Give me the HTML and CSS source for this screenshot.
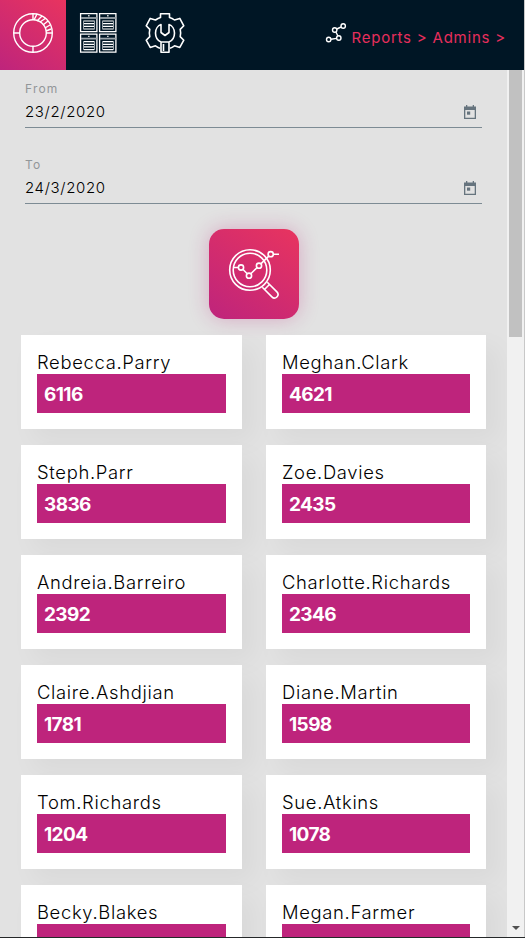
FILE: index.html
```
<!DOCTYPE html>
<html lang="en">
<head>
<meta charset="utf-8">
<title>Reports</title>
<link rel="stylesheet" href="styles.css">
</head>
<body>
<div class="app">
  <header class="topbar">
    <nav class="nav">
      <a class="tab active"><svg width="42" height="42" viewBox="0 0 42 42" fill="none" stroke="#fff" stroke-width="1.4"><circle cx="21" cy="21" r="19.3"/><circle cx="21" cy="21" r="13.3"/><path d="M21 2v6M2 21h6M21 34v6M34 21h6M22 8l3-6M25 9l5-5M28 10l6-4M31 13l5-4M33 16l5-3M34 19l5-2"/></svg></a>
      <a class="tab"><svg width="42" height="42" viewBox="0 0 42 42" fill="none" stroke="#fff" stroke-width="1.3"><defs><g id="page"><path d="M.6.6h16.300v18H.6z"/><path d="M1 5h16" stroke="#9ba4ab" stroke-width="1.800"/><path d="M4 8h10M4 16h10M4 10.700h10M4 13.300h10" stroke-width="1.2"/><path d="M3.500 7.500v9M14.500 7.500v9" stroke="#9ba4ab" stroke-width="1"/><path d="M8.200 2.800h1.300" stroke-width="1.4"/></g></defs><use href="#page" x="2" y="1"/><use href="#page" x="21" y="1"/><use href="#page" x="2" y="21.6"/><use href="#page" x="21" y="21.6"/></svg></a>
      <a class="tab"><svg width="42" height="42" viewBox="0 0 42 42" fill="none" stroke="#fff" stroke-width="1.6" stroke-linejoin="round"><path d="M16 36.2c-1.400-.4-3-1.400-4.500-2.400l-5.300 1.600-4-7.200 3.600-3.600c-.6-2.300-.6-4.900 0-7.200l-3.600-3.600 4-7.400 5.300 1.600c1.600-1.200 3-2 5-2.500V1.700h9v3.800c2 .5 3.500 1.300 5 2.500l5.300-1.600 4 7.400-3.600 3.600c.6 2.300.6 4.900 0 7.200l3.600 3.600-4 7.200-5.300-1.600c-1.500 1.100-3 2-4.500 2.400"/><path d="M17 30c-3.500-1.500-5.500-5-5.500-9 0-4 2.500-7.500 5.500-8.500v8l4 3 4-3v-8c3 1 5.500 4.500 5.500 8.500s-2 7.500-5.500 9v10.300h-8zM17 30h8M19.500 32v7"/></svg></a>
    </nav>
    <div class="crumbs">
      <svg width="22" height="22" viewBox="0 0 22 22" fill="none" stroke="#fff" stroke-width="1.4"><circle cx="3.700" cy="17.500" r="2.200"/><circle cx="13.800" cy="16" r="2.200"/><circle cx="9.700" cy="8" r="2.200"/><circle cx="18.200" cy="4" r="2.200"/><path d="M6 17.200l5.600-.8M10.900 10l2 4M11.800 7l4.300-2"/></svg>
      <span>Reports &gt; Admins &gt;</span>
    </div>
  </header>
  <div class="body">
    <main class="content">
      <div class="field"><label>From</label><div class="value"><span>23/2/2020</span><svg class="cal" viewBox="0 0 12 14"><path d="M2 0h1.300v1.500h5.400V0H10v1.500h2V14H0V1.500h2zM1.300 5v7.700h9.400V5z"/><path d="M3 6.500h3.200v3.200H3z"/></svg></div></div>
      <div class="field"><label>To</label><div class="value"><span>24/3/2020</span><svg class="cal" viewBox="0 0 12 14"><path d="M2 0h1.300v1.500h5.400V0H10v1.500h2V14H0V1.500h2zM1.300 5v7.700h9.400V5z"/><path d="M3 6.500h3.200v3.200H3z"/></svg></div></div>
      <button class="search"><svg width="90" height="90" viewBox="0 0 90 90" fill="none" stroke="#fff" stroke-width="1.600"><circle cx="41" cy="41" r="20.300"/><circle cx="41" cy="41" r="16.800"/><circle cx="32" cy="38.500" r="2.600"/><circle cx="40" cy="46.700" r="2.600"/><circle cx="50" cy="36.700" r="2.600"/><circle cx="61.700" cy="25.200" r="2.600"/><path d="M25 38.500h4.400M33.800 40.300l4.400 4.500M41.800 44.800l6.400-6.300M51.800 34.800l8-7.700M64.300 25.200H70M53.300 58.300l9.600 9.600c3.300 3.300 8.300-1.500 5-5l-9.600-9.600M55.700 60.300l5-5"/></svg></button>
      <section class="cards">
        <article><h2>Rebecca.Parry</h2><p>6116</p></article><article><h2>Meghan.Clark</h2><p>4621</p></article>
        <article><h2>Steph.Parr</h2><p>3836</p></article><article><h2>Zoe.Davies</h2><p>2435</p></article>
        <article><h2>Andreia.Barreiro</h2><p>2392</p></article><article><h2>Charlotte.Richards</h2><p>2346</p></article>
        <article><h2>Claire.Ashdjian</h2><p>1781</p></article><article><h2>Diane.Martin</h2><p>1598</p></article>
        <article><h2>Tom.Richards</h2><p>1204</p></article><article><h2>Sue.Atkins</h2><p>1078</p></article>
        <article><h2>Becky.Blakes</h2><p>1010</p></article><article><h2>Megan.Farmer</h2><p>1010</p></article>
      </section>
    </main>
    <div class="scrollbar"><div class="thumb"></div><div class="arrow"></div></div>
  </div>
</div>
</body>
</html>
```
FILE: styles.css
```
* { box-sizing: border-box; }
body { margin: 0; font-family: Inter, "Liberation Sans", sans-serif; color: #000; overflow: hidden; }
.app { height: 938px; display: flex; flex-direction: column; border-bottom: 1px solid #252829; background: #e2e2e2; }
.topbar { height: 70px; flex: none; background: #001625; display: flex; justify-content: space-between; border-right: 1px solid #c8c8c8; }
.nav { display: flex; }
.tab { width: 66px; height: 70px; padding: 12px; }
.tab svg { display: block; }
.active { background: linear-gradient(35deg, #be247c, #e8345f); }
.crumbs { display: flex; align-items: center; gap: 4px; padding: 5px 18px 0 0; color: #e62e5c; font-size: 15px; letter-spacing: .78px; white-space: nowrap; }
.crumbs svg { margin-top: -9px; }
.body { flex: 1; min-height: 0; display: flex; }
.content { width: 507px; overflow: hidden; }
.field { margin: 0 25px 18px; height: 58px; border-bottom: 1px solid #7d8b94; }
.field label { display: block; padding-top: 12px; font-size: 12px; line-height: 14px; color: #929699; letter-spacing: 1.2px; }
.value { display: flex; justify-content: space-between; align-items: center; height: 32px; font-size: 15px; font-weight: 350; letter-spacing: .65px; }
.value span { margin-top: -2px; }
.cal { width: 12px; height: 14px; margin-right: 6px; fill: #66747e; fill-rule: evenodd; }
.search { display: block; width: 90px; height: 90px; margin: 25px 0 16px 209px; padding: 0; border: 0; border-radius: 15px; background: linear-gradient(35deg, #be247c, #e8345f); box-shadow: 0 0 20px rgba(190, 36, 124, .3); }
.cards { display: grid; grid-template-columns: 221px 220px; column-gap: 24px; row-gap: 16px; padding-left: 21px; }
article { position: relative; height: 94px; padding: 16px; background: #fff; box-shadow: 12px 12px 24px rgba(0, 0, 0, .04); }
h2 { margin: 0; height: 23px; line-height: 23px; font-size: 18.4px; font-weight: 300; letter-spacing: .68px; white-space: nowrap; }
p { margin: 0; height: 39px; padding-left: 7px; line-height: 41px; background: #be247c; color: #fff; font-size: 19px; font-weight: 700; letter-spacing: -.6px; }
.scrollbar { width: 18px; background: #f1f1f1; border-right: 1px solid #c8c8c8; display: flex; flex-direction: column; justify-content: space-between; align-items: center; padding-bottom: 7px; }
.thumb { width: 13px; height: 267px; background: #c1c1c1; }
.arrow { border: 4px solid transparent; border-top-color: #505050; border-bottom: 0; }
```
